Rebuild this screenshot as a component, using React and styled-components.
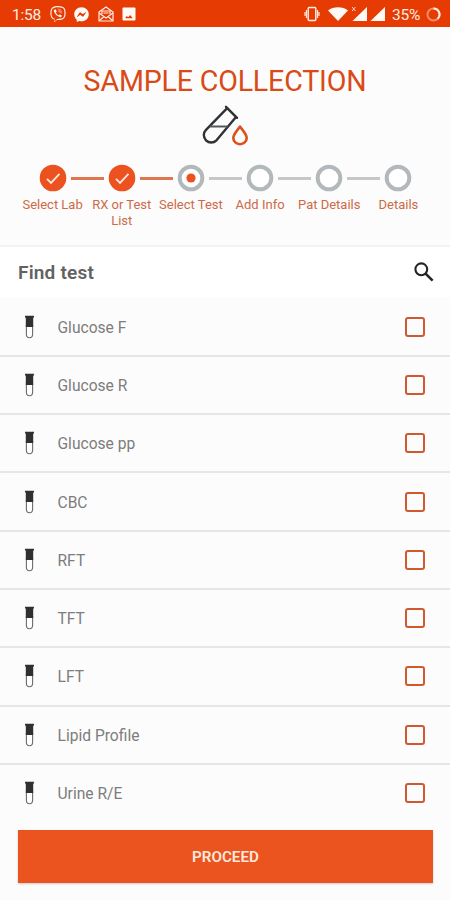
import styled, { createGlobalStyle } from "styled-components";
import { FaViber, FaFacebookMessenger } from "react-icons/fa";

const GlobalStyle = createGlobalStyle`
  * {
    box-sizing: border-box;
  }

  body {
    margin: 0;
    background-color: #fcfcfc;
    font-family: Roboto, "Liberation Sans", sans-serif;
  }

  svg {
    display: block;
    flex-shrink: 0;
  }
`;

const Screen = styled.div`
  width: 450px;
  height: 900px;
  display: flex;
  flex-direction: column;
  overflow: hidden;
  background-color: #fcfcfc;
`;

const StatusBar = styled.header`
  height: 27px;
  flex-shrink: 0;
  display: flex;
  align-items: center;
  justify-content: space-between;
  padding: 1px 9px 0 12px;
  background-color: #e63c04;
  color: #ffeee4;
`;

const StatusGroup = styled.div`
  display: flex;
  align-items: center;
  gap: ${({ $gap }) => $gap}px;
`;

const StatusText = styled.span`
  width: ${({ $width }) => $width}px;
  padding-top: 1px;
  font-size: 15.5px;
  line-height: 20px;
  letter-spacing: -0.2px;
  white-space: nowrap;
`;

const Hero = styled.section`
  height: 218px;
  flex-shrink: 0;
  display: flex;
  flex-direction: column;
  align-items: center;
  padding-top: 36px;
`;

const Title = styled.h1`
  margin: 0;
  font-size: 28.6px;
  font-weight: 400;
  line-height: 36px;
  letter-spacing: -0.18px;
  white-space: nowrap;
  color: #d94a16;
`;

const HeroIcon = styled.div`
  padding: 6px 0 0 2px;
  height: 65px;
`;

const Steps = styled.ol`
  width: 415px;
  display: grid;
  grid-template-columns: repeat(6, 1fr);
  margin: 0 0 0 1px;
  padding: 0;
  list-style: none;
`;

const StepItem = styled.li`
  display: flex;
  flex-direction: column;
  align-items: center;
`;

const Track = styled.div`
  width: 100%;
  display: grid;
  grid-template-columns: 1fr 28px 1fr;
  align-items: center;
`;

const Line = styled.span`
  height: 3px;
  margin-left: ${({ $after }) => ($after ? "4px" : "0")};
  margin-right: ${({ $after }) => ($after ? "0" : "4px")};
  background-color: ${({ $color }) => $color};
`;

const StepLabel = styled.span`
  max-width: 66px;
  margin-top: 5px;
  font-size: 13px;
  line-height: 15.5px;
  text-align: center;
  color: #cc6a47;
`;

const SearchBar = styled.div`
  height: 52px;
  flex-shrink: 0;
  display: flex;
  align-items: center;
  justify-content: space-between;
  padding: 0 16px 0 18px;
  border-top: 2px solid #f3f3f3;
  background-color: #fff;
`;

const SearchLabel = styled.h2`
  margin: 0;
  padding-top: 1px;
  font-size: 19px;
  font-weight: 600;
  letter-spacing: 0.2px;
  color: #626262;
`;

const TestList = styled.ul`
  margin: 1.5px 0 0;
  padding: 0;
  list-style: none;
`;

const TestRow = styled.li`
  height: 58.3px;
  display: flex;
  align-items: center;
  padding: 0 25px;
  border-bottom: 2px solid #e6e6e6;

  &:last-child {
    border-bottom-color: transparent;
  }
`;

const TestName = styled.span`
  flex: 1;
  margin-left: 23.5px;
  padding-top: 2px;
  font-size: 15.6px;
  line-height: 20px;
  color: #7d7d7d;
`;

const Checkbox = styled.span`
  width: 20px;
  height: 20px;
  border: 2px solid #d0592f;
  border-radius: 3px;
`;

const ProceedButton = styled.button`
  width: 415px;
  height: 53px;
  flex-shrink: 0;
  margin: 6.8px 0 0 18px;
  padding: 2px 0 0;
  border: 0;
  background-color: #eb531f;
  box-shadow: 0 1px 2px rgba(0, 0, 0, 0.2);
  font-family: inherit;
  font-size: 15.2px;
  font-weight: 600;
  color: #ffe9dd;
`;

const ORANGE = "#eb5220";
const GREY = "#b3b9bb";

const STEPS = [
  { label: "Select Lab", status: "done" },
  { label: "RX or Test List", status: "done" },
  { label: "Select Test", status: "current" },
  { label: "Add Info", status: "pending" },
  { label: "Pat Details", status: "pending" },
  { label: "Details", status: "pending" },
];

const TESTS = [
  "Glucose F",
  "Glucose R",
  "Glucose pp",
  "CBC",
  "RFT",
  "TFT",
  "LFT",
  "Lipid Profile",
  "Urine R/E",
];

function MailIcon() {
  return (
    <svg width="16" height="16" viewBox="0 0 16 16" fill="none" stroke="currentColor" strokeWidth="1.2">
      <path d="M1 6 8 1l7 5v9H1Z" />
      <path d="m1 7 7 5 7-5M1.5 14.5 6 10.5M14.5 14.5 10 10.5" />
      <path d="M4 8V5h8v3M5.5 7h5" />
    </svg>
  );
}

function PictureIcon() {
  return (
    <svg width="14" height="14" viewBox="0 0 14 14">
      <rect x="0.5" y="0.5" width="13" height="13" rx="1" fill="#fffaf5" />
      <path d="m3 11.3 1.8-2.4 1.4 1.4 1.9-2.3 2.7 3.3Z" fill="#e63c04" />
    </svg>
  );
}

function VibrateIcon() {
  return (
    <svg width="16" height="16" viewBox="0 0 16 16" fill="none" stroke="currentColor" strokeWidth="1.5">
      <rect x="4.2" y="1.5" width="7.6" height="13" rx="1" />
      <path d="M2.4 4v8M13.6 4v8M1 6v4M15 6v4" strokeWidth="1.1" />
    </svg>
  );
}

function WifiIcon() {
  return (
    <svg width="20" height="14" viewBox="0 0 20 14" fill="#fffaf5">
      <path d="M10 14 0 3.6C5.4-.8 14.6-.8 20 3.6Z" />
    </svg>
  );
}

function SignalIcon({ noData }) {
  return (
    <svg width="18" height="16" viewBox="0 0 18 16">
      <path d="M18 1v14H3.5Z" fill="#fffaf5" />
      {noData && <path d="m3 1 3.5 4M6.5 1 3 5" stroke="#ffd9c8" strokeWidth="1" />}
    </svg>
  );
}

function BatteryIcon() {
  return (
    <svg width="15" height="15" viewBox="0 0 15 15" fill="none" strokeWidth="2">
      <circle cx="7.5" cy="7.5" r="6" stroke="#f48c66" />
      <path d="M7.5 1.5a6 6 0 0 1 4.2 10.3" stroke="#ffeee4" />
    </svg>
  );
}

function SampleIcon() {
  return (
    <svg width="48" height="42" viewBox="0 0 48 42" fill="none">
      <g stroke="#303336" strokeWidth="2.4" strokeLinecap="round" strokeLinejoin="round">
        <path d="m24 1.8 11 11" />
        <path d="M25.2 3.2 4 24.8a7.4 7.4 0 0 0 10.5 10.5L33.8 12.3" />
        <path d="M8.7 21.5h16" strokeWidth="2" stroke="#55585a" />
      </g>
      <path
        d="M38 21.5c-3.2 4.6-6.7 7.8-6.7 11.5a6.7 6.2 0 0 0 13.4 0c0-3.7-3.5-6.9-6.7-11.5Z"
        stroke="#dc5218"
        strokeWidth="2.6"
        strokeLinejoin="round"
      />
    </svg>
  );
}

function StepMarker({ status }) {
  return (
    <svg width="28" height="28" viewBox="0 0 28 28" fill="none">
      {status === "done" ? (
        <>
          <circle cx="14" cy="14" r="13.3" fill={ORANGE} />
          <path d="m8 14.8 4 4 8.5-9" stroke="#ffe6da" strokeWidth="1.9" />
        </>
      ) : (
        <circle cx="14" cy="14" r="11.3" stroke={GREY} strokeWidth="4" fill="#fff" />
      )}
      {status === "current" && <circle cx="14" cy="14" r="4.6" fill={ORANGE} />}
    </svg>
  );
}

function SearchIcon() {
  return (
    <svg width="20" height="20" viewBox="0 0 20 20" fill="none" stroke="#242424">
      <circle cx="7.3" cy="7.3" r="5.9" strokeWidth="2.1" />
      <path d="m11.6 11.6 7 7" strokeWidth="2.5" />
    </svg>
  );
}

function TubeIcon() {
  return (
    <svg width="9" height="24" viewBox="0 0 9 24">
      <path d="M1.4 10v9.6a3.1 3.1 0 0 0 6.2 0V10" fill="#fff" stroke="#6c6c6c" strokeWidth="1.1" />
      <path d="M0 .8h9v1.8H8.2V12H.8V2.6H0Z" fill="#303030" />
    </svg>
  );
}

function Step({ step, index }) {
  const lineColor = (done) => (done ? "#e07650" : "#c6c8c8");
  const isFirst = index === 0;
  const isLast = index === STEPS.length - 1;
  const prevDone = !isFirst && STEPS[index - 1].status === "done";

  return (
    <StepItem>
      <Track>
        <Line $color={isFirst ? "transparent" : lineColor(prevDone)} />
        <StepMarker status={step.status} />
        <Line
          $after
          $color={isLast ? "transparent" : lineColor(step.status === "done")}
        />
      </Track>
      <StepLabel>{step.label}</StepLabel>
    </StepItem>
  );
}

function App() {
  return (
    <Screen>
      <GlobalStyle />
      <StatusBar>
        <StatusGroup $gap={8.5}>
          <StatusText $width={29}>1:58</StatusText>
          <FaViber size={16} />
          <FaFacebookMessenger size={15} color="#fffaf5" />
          <MailIcon />
          <PictureIcon />
        </StatusGroup>
        <StatusGroup $gap={7}>
          <StatusGroup $gap={8}>
            <VibrateIcon />
            <StatusGroup $gap={0.5}>
              <WifiIcon />
              <SignalIcon noData />
              <SignalIcon />
            </StatusGroup>
          </StatusGroup>
          <StatusGroup $gap={5}>
            <StatusText $width={29}>35%</StatusText>
            <BatteryIcon />
          </StatusGroup>
        </StatusGroup>
      </StatusBar>

      <Hero>
        <Title>SAMPLE COLLECTION</Title>
        <HeroIcon>
          <SampleIcon />
        </HeroIcon>
        <Steps>
          {STEPS.map((step, index) => (
            <Step key={step.label} step={step} index={index} />
          ))}
        </Steps>
      </Hero>

      <SearchBar>
        <SearchLabel>Find test</SearchLabel>
        <SearchIcon />
      </SearchBar>

      <TestList>
        {TESTS.map((name) => (
          <TestRow key={name}>
            <TubeIcon />
            <TestName>{name}</TestName>
            <Checkbox />
          </TestRow>
        ))}
      </TestList>

      <ProceedButton>PROCEED</ProceedButton>
    </Screen>
  );
}

export default App;
